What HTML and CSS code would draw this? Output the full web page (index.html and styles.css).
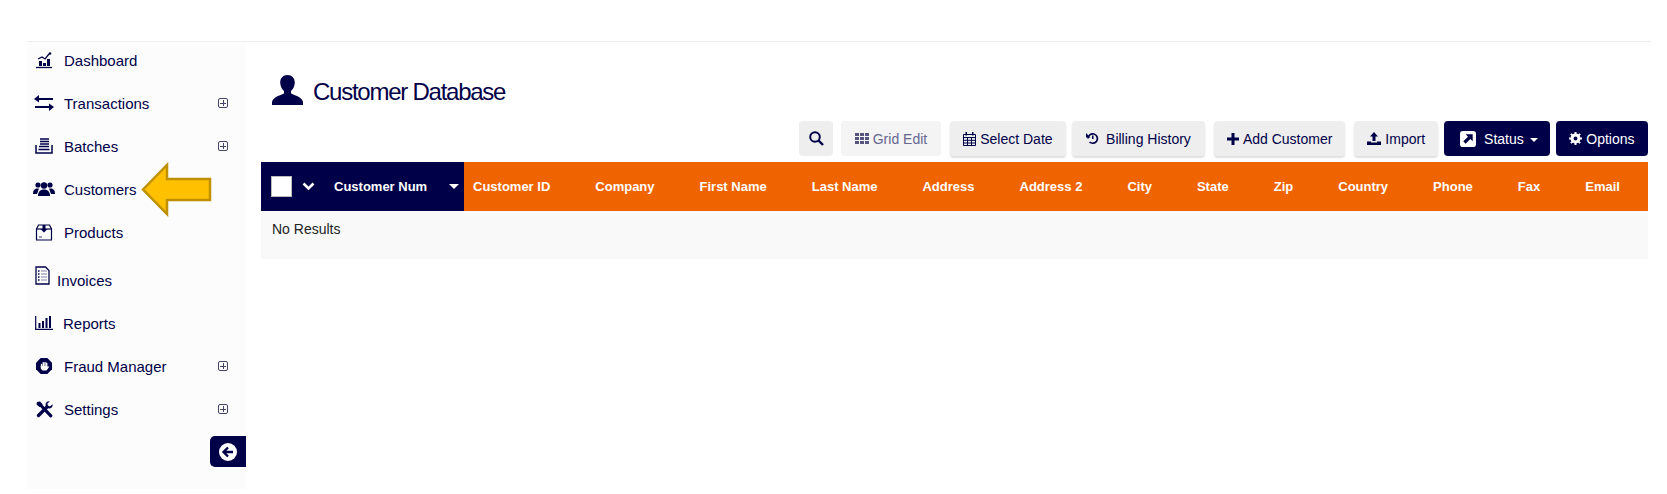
FILE: index.html
```html
<!DOCTYPE html>
<html lang="en">
<head>
<meta charset="utf-8">
<title>Customer Database</title>
<link rel="stylesheet" href="styles.css">
</head>
<body>
<div class="app">
  <nav class="sidebar">
    <a class="nav-item"><span class="nav-icon"><svg width="20" height="18" viewBox="0 0 20 18"><path d="M2 16.500h16" stroke="#000048" stroke-width="1.300"/><path d="M5 10h3v5H5zM9 12h3v3H9zM13 8h3v7h-3z" fill="#000048"/><path d="M4 8l4-2 3 2 4-5" fill="none" stroke="#000048" stroke-width="1.300"/><circle cx="16" cy="2.500" r="1.300" fill="#000048"/></svg></span><span class="nav-label">Dashboard</span></a>
    <a class="nav-item"><span class="nav-icon"><svg width="20" height="16" viewBox="0 0 20 16"><path d="M3 4h16M17 12H1" stroke="#000048" stroke-width="2"/><path d="M5 0L0 4l5 3.500zM15 8.500l5 3.500-5 4z" fill="#000048"/></svg></span><span class="nav-label">Transactions</span><span class="plus"></span></a>
    <a class="nav-item"><span class="nav-icon"><svg width="18" height="16" viewBox="0 0 18 16"><path d="M5 1h9M5 3.500h9M5 6h9M4 8.500h10" stroke="#000048" stroke-width="1.300"/><path d="M1 7v8h16V7M3.500 11.500h11" fill="none" stroke="#000048" stroke-width="1.500"/></svg></span><span class="nav-label">Batches</span><span class="plus"></span></a>
    <a class="nav-item nav-customers"><span class="nav-icon"><svg width="22" height="16" viewBox="0 0 22 16"><circle cx="5" cy="4" r="2.600" fill="#000048"/><circle cx="17" cy="4" r="2.600" fill="#000048"/><circle cx="11" cy="4.500" r="3.200" fill="#000048"/><path d="M0 12c0-3 2-4.500 4-4.500h2L4 13H0zM22 12c0-3-2-4.500-4-4.500h-2l2 5.500h4zM5 15c0-4 2-6.500 6-6.500s6 2.500 6 6.500z" fill="#000048"/></svg></span><span class="nav-label">Customers</span>
      <svg class="callout" width="72" height="55" viewBox="0 0 72 55"><path d="M3 27.500L27 3v14h43v21H27v14z" fill="#ffc000" stroke="#bf9000" stroke-width="2.500"/></svg>
    </a>
    <a class="nav-item"><span class="nav-icon"><svg width="18" height="17" viewBox="0 0 18 17"><path d="M1.500 5L3.500 1h11l2 4v11h-15z" fill="none" stroke="#000048" stroke-width="1.200"/><path d="M1.500 5h15" stroke="#000048" stroke-width="1.200"/><path d="M7.500 1h3v4h2l-3.500 3.500L5.500 5h2z" fill="#000048"/><path d="M4 12h3v2H4z" fill="#9a9ab8"/></svg></span><span class="nav-label">Products</span></a>
    <a class="nav-item nav-invoices"><span class="nav-icon nav-icon-doc"><svg width="15" height="19" viewBox="0 0 15 19"><path d="M1 1h9.500L14 4.500V18H1z" fill="#fff" stroke="#000048" stroke-width="1.300"/><path d="M3 5h1.500M3 8h1.500M3 11h1.500M3 14h1.500" stroke="#000048" stroke-width="1.300"/><path d="M6 5h6M6 8h6M6 11h6M6 14h6" stroke="#7f7fa5" stroke-width="1"/></svg></span><span class="nav-label">Invoices</span></a>
    <a class="nav-item nav-reports"><span class="nav-icon"><svg width="18" height="14" viewBox="0 0 18 14"><path d="M.7 0v13.300H18" fill="none" stroke="#000048" stroke-width="1.200"/><path d="M3.500 7h2v5h-2zM7 5h2v7H7zM10.500 2h2v10h-2zM14 0h2v12h-2z" fill="#000048"/></svg></span><span class="nav-label">Reports</span></a>
    <a class="nav-item"><span class="nav-icon"><svg width="16" height="16" viewBox="0 0 16 16"><path d="M4.700 0h6.600L16 4.700v6.600L11.300 16H4.700L0 11.300V4.700z" fill="#000048"/><path d="M5.500 6.500v4M7.300 4.800v4M9 4.500v4M10.700 5.300v4" stroke="#fff" stroke-width="1.400" stroke-linecap="round"/><path d="M4.800 8h6.700v1.200l1.300-1c.5 0 .6.400.3.800L10.500 12.500H7.300C5.800 12.500 4.800 10.500 4.800 8z" fill="#fff"/></svg></span><span class="nav-label">Fraud Manager</span><span class="plus"></span></a>
    <a class="nav-item"><span class="nav-icon"><svg width="17" height="17" viewBox="0 0 17 17"><path d="M2.500 14.500L11 6M5 4.500L14.800 14.800" stroke="#000048" stroke-width="3.200" stroke-linecap="round"/><path d="M1 1l3-.5 2.500 2.500-.5 2.500-2.500.5L.5 3.500zM16.500 3.200L14 5.500l-2-.7-.7-2L13.800.3C11 -.3 9 2 9.700 5l2.300 2.300c3 .7 5.200-1.300 4.500-4.100z" fill="#000048"/></svg></span><span class="nav-label">Settings</span><span class="plus"></span></a>
    <button class="collapse"><svg width="18" height="18" viewBox="0 0 18 18"><circle cx="9" cy="9" r="9" fill="#fff"/><path d="M14 9H5M9 4.500L4.500 9 9 13.500" fill="none" stroke="#000048" stroke-width="2.400"/></svg></button>
  </nav>
  <main class="main">
    <div class="page-title">
      <svg width="31" height="30" viewBox="0 0 31 30"><path d="M15.500 0c4.500 0 7.300 3.200 7.300 7.500 0 3.500-1.800 7-3.800 8.500v2.300c1 1.500 11 3 12 8.700v3H0v-3c1-5.700 11-7.200 12-8.700V16c-2-1.500-3.800-5-3.800-8.500C8.200 3.200 11 0 15.500 0z" fill="#000048"/></svg>
      <h1>Customer Database</h1>
    </div>
    <div class="toolbar">
      <button class="btn btn-search"><svg width="15" height="15" viewBox="0 0 15 15"><circle cx="6" cy="6" r="4.800" fill="none" stroke="#000048" stroke-width="2"/><path d="M9.500 9.500L14 14" stroke="#000048" stroke-width="2.400"/></svg></button>
      <button class="btn btn-disabled"><svg width="14" height="11" viewBox="0 0 14 11"><path d="M0 0h4v3H0zM5 0h4v3H5zM10 0h4v3h-4zM0 4h4v3H0zM5 4h4v3H5zM10 4h4v3h-4zM0 8h4v3H0zM5 8h4v3H5zM10 8h4v3h-4z" fill="#555580"/></svg>Grid Edit</button>
      <button class="btn wide btn-date"><svg width="13" height="14" viewBox="0 0 13 14"><path d="M.5 2.500h12v11H.5zM.5 5.500h12M4.500 5.500v8M8.500 5.500v8M.5 8.300h12M.5 11h12" fill="none" stroke="#000048"/><path d="M2.500 0h1.500v3.500H2.500zM9 0h1.500v3.500H9z" fill="#000048"/></svg>Select Date</button>
      <button class="btn btn-billing"><svg width="13" height="13" viewBox="0 0 13 13"><path d="M2 6.500a4.700 4.700 0 1 1 1.500 3.500" fill="none" stroke="#000048" stroke-width="1.700"/><path d="M0 1l4.500 4.500H0zM6 3.500h1.500v3.500H6z" fill="#000048"/></svg>Billing History</button>
      <button class="btn wide"><svg width="12" height="12" viewBox="0 0 12 12"><path d="M4.500 0h3v4.500H12v3H7.500V12h-3V7.500H0v-3h4.500z" fill="#000048"/></svg>Add Customer</button>
      <button class="btn wide btn-import"><svg width="14" height="13" viewBox="0 0 14 13"><path d="M7 0l4 4.500H8.500V9h-3V4.500H3z" fill="#000048"/><path d="M0 9.500h4v1h6v-1h4V13H0z" fill="#000048"/></svg>Import</button>
      <button class="btn btn-dark btn-status"><svg class="status-icon" width="16" height="16" viewBox="0 0 17 17"><rect width="17" height="17" rx="3" fill="#fff"/><path d="M6 3.500h7.500V11L11 8.500 6 13.500 3.500 11l5-5z" fill="#000048"/></svg>Status<span class="caret"></span></button>
      <button class="btn btn-dark btn-options"><svg width="13" height="13" viewBox="0 0 13 13"><circle cx="6.500" cy="6.500" r="3.700" fill="none" stroke="#fff" stroke-width="2.600"/><path d="M6.500 0v13M0 6.500h13M1.900 1.900l9.200 9.200M11.100 1.900l-9.200 9.200" stroke="#fff" stroke-width="2"/><circle cx="6.500" cy="6.500" r="1.900" fill="#000048"/></svg>Options</button>
    </div>
    <div class="grid-head">
      <div class="head-fixed">
        <span class="check"></span>
        <svg class="chev" width="13" height="9" viewBox="0 0 13 9"><path d="M1.500 1.500l5 5 5-5" fill="none" stroke="#fff" stroke-width="2.600"/></svg>
        <span class="head-title">Customer Num</span>
        <span class="head-caret"></span>
      </div>
      <div class="head-cols">
        <span>Customer ID</span><span>Company</span><span>First Name</span><span>Last Name</span><span>Address</span><span>Address 2</span><span>City</span><span>State</span><span>Zip</span><span>Country</span><span>Phone</span><span>Fax</span><span>Email</span>
      </div>
    </div>
    <div class="no-results">No Results</div>
  </main>
</div>
</body>
</html>
```
FILE: styles.css
```css
* { box-sizing: border-box; }
html, body { margin: 0; padding: 0; background: #fff; }
body { font-family: "Liberation Sans", Arial, sans-serif; color: #000048; height: 494px; overflow: hidden; }

.app {
  display: flex;
  margin: 41px 16px 0 27px;
  height: 448px;
  border-top: 1px solid #eee;
}

.sidebar {
  width: 219px;
  flex: none;
  background: #fcfcfc;
  padding-top: 6px;
  display: flex;
  flex-direction: column;
  gap: 19px;
}
.nav-item {
  position: relative;
  display: flex;
  flex: none;
  align-items: center;
  height: 24px;
  font-size: 15px;
  color: #000048;
}
.nav-icon {
  width: 37px;
  flex: none;
  display: flex;
  justify-content: center;
  padding-right: 3px;
}
.nav-label { white-space: nowrap; }
.plus {
  width: 10px;
  height: 10px;
  border: 1px solid #444468;
  border-radius: 2px;
  margin-left: auto;
  margin-right: 18px;
  background:
    linear-gradient(#444468, #444468) center / 6px 1px no-repeat,
    linear-gradient(#444468, #444468) center / 1px 6px no-repeat;
}
.callout { position: absolute; left: 113px; top: -15px; }
.nav-invoices { margin-top: 5px; }
.nav-invoices .nav-icon { width: 30px; padding-right: 0; }
.nav-icon-doc svg { margin-top: -10px; }
.nav-reports .nav-icon { width: 36px; }

.collapse {
  align-self: flex-end;
  flex: none;
  width: 36px;
  height: 31px;
  margin-top: -4px;
  border: 0;
  padding: 0;
  background: #000048;
  border-radius: 5px 0 0 5px;
  display: flex;
  align-items: center;
  justify-content: center;
}

.main {
  flex: 1;
  min-width: 0;
  padding: 32px 3px 0 15px;
}

.page-title {
  display: flex;
  align-items: center;
  gap: 10px;
  height: 31px;
  padding-left: 11px;
}
.page-title h1 {
  margin: 4px 0 0;
  font-size: 24px;
  font-weight: 400;
  letter-spacing: -1.25px;
  color: #000048;
}

.toolbar {
  display: flex;
  justify-content: flex-end;
  gap: 6px;
  margin-top: 16px;
}
.btn {
  display: inline-flex;
  align-items: center;
  justify-content: center;
  gap: 4px;
  height: 35px;
  padding: 0 13px;
  border: 0;
  border-radius: 4px;
  background: #eee;
  box-shadow: 0 2px 2px #e0e0e0;
  font: 14px "Liberation Sans", Arial, sans-serif;
  color: #000048;
  white-space: nowrap;
}
.wide { margin-left: 3px; }
.btn-search { width: 34px; padding: 0; box-shadow: none; }
.btn-disabled { background: #f4f4f4; box-shadow: none; color: #666690; margin-left: 2px; padding: 0 13.5px; }
.btn-date { padding: 0 13.5px; }
.btn-billing { padding: 0 14px; gap: 7px; }
.btn-import { padding: 0 13px; }
.btn-options { padding: 0 13.5px; }
.btn-dark { background: #000048; color: #fff; box-shadow: none; }
.btn-status { padding: 0 12px 0 16px; }
.status-icon { margin-right: 4px; }
.caret {
  width: 0;
  height: 0;
  margin-left: 2px;
  margin-top: 2px;
  border-left: 4px solid transparent;
  border-right: 4px solid transparent;
  border-top: 4px solid #fff;
}

.grid-head {
  display: flex;
  height: 49px;
  margin-top: 6px;
  background: #f06400;
  font-size: 13px;
  font-weight: 700;
  color: #fff;
}
.head-fixed {
  display: flex;
  align-items: center;
  width: 203px;
  flex: none;
  padding-left: 10px;
  background: #000048;
}
.check {
  width: 21px;
  height: 21px;
  background: #fff;
  border: 1px solid #bbb;
}
.chev { margin-left: 10px; }
.head-title { margin-left: 19px; white-space: nowrap; }
.head-caret {
  margin-left: auto;
  margin-right: 5px;
  width: 0;
  height: 0;
  border-left: 5px solid transparent;
  border-right: 5px solid transparent;
  border-top: 5px solid #fff;
}
.head-cols {
  display: flex;
  align-items: center;
  gap: 45px;
  padding-left: 9px;
  white-space: nowrap;
}
.no-results {
  height: 48px;
  padding: 10px 11px 0;
  background: #f9f9f9;
  font-size: 14px;
  line-height: 16px;
  color: #222;
}
```
